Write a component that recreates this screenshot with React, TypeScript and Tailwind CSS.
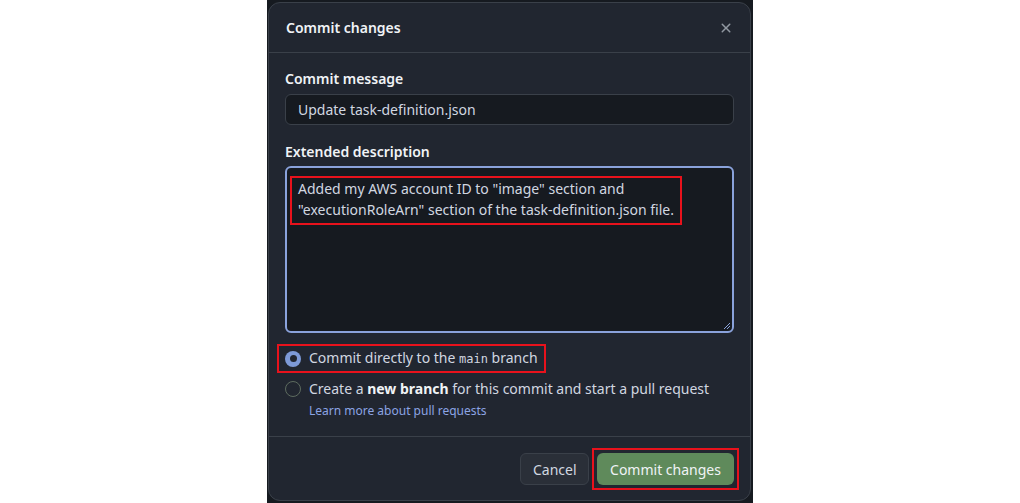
import React from 'react';

function CloseIcon() {
  return (
    <svg width="16" height="16" viewBox="0 0 16 16" fill="#9198a1">
      <path d="M3.72 3.72a.75.75 0 0 1 1.06 0L8 6.94l3.22-3.22a.749.749 0 0 1 1.275.326.749.749 0 0 1-.215.734L9.06 8l3.22 3.22a.749.749 0 0 1-.326 1.275.749.749 0 0 1-.734-.215L8 9.06l-3.22 3.22a.751.751 0 0 1-1.042-.018.751.751 0 0 1-.018-1.042L6.94 8 3.72 4.78a.75.75 0 0 1 0-1.06Z" />
    </svg>
  );
}

function App() {
  return (
    <div className="h-[503px] bg-white flex justify-center font-['Noto_Sans',sans-serif] text-[14px]">
      <div className="w-[486px] h-full bg-[#161a20] pl-px pr-[2px] pt-[2px] pb-[2px]">
        <div className="h-full rounded-xl border border-[#3a4049] bg-[#212630] flex flex-col">
          {/* Header */}
          <div className="h-[50px] flex items-center justify-between pl-[17px] pr-[16px] border-b border-[#3a4049]">
            <h2 className="font-semibold text-[#f0f3f6]">Commit changes</h2>
            <CloseIcon />
          </div>

          {/* Body */}
          <div className="pl-4 pr-[16px] pt-4 flex-1">
            <label className="block font-semibold text-[#f0f3f6] leading-5 mb-[5px]">Commit message</label>
            <div className="h-[31px] rounded-md border border-[#3a4049] bg-[#161a20] flex items-center px-3 text-[#d1d7e0]">
              Update task-definition.json
            </div>

            <label className="block font-semibold text-[#f0f3f6] leading-5 mt-[17px] mb-[4px]">Extended description</label>
            <div className="relative h-[167px] rounded-md border-2 border-[#8aa2db] bg-[#161a20] pl-[3px] pt-[8px]">
              <div className="inline-block border-2 border-[#e8121c] px-[6px] pb-[3px] text-[#d1d7e0] leading-[21px]">
                Added my AWS account ID to "image" section and<br />
                "executionRoleArn" section of the task-definition.json file.
              </div>
              <svg className="absolute right-[1px] bottom-[1px]" width="8" height="8" viewBox="0 0 8 8" stroke="#8aa2db" strokeWidth="1">
                <line x1="1" y1="7" x2="7" y2="1" />
                <line x1="4" y1="7" x2="7" y2="4" />
              </svg>
            </div>

            <div className="mt-[15px] flex flex-col">
              <div className="self-start -mx-2 -my-1 border-2 border-[#e8121c] px-1.5 py-0.5 flex items-center gap-2 leading-5 text-[#d1d7e0]">
                <span className="w-4 h-4 rounded-full bg-[#7d9ad8] flex items-center justify-center">
                  <span className="w-[7px] h-[7px] rounded-full bg-[#212630]" />
                </span>
                <span>
                  Commit directly to the <span className="font-['DejaVu_Sans_Mono',monospace] text-[12px]">main</span> branch
                </span>
              </div>

              <div className="mt-[10px] flex items-center gap-2 leading-5 text-[#d1d7e0]">
                <span className="w-4 h-4 rounded-full border border-[#5d6b5f]" />
                <span>
                  Create a <span className="font-bold text-[#f0f3f6]">new branch</span> for this commit and start a pull request
                </span>
              </div>
              <a className="ml-[24px] mt-[3px] text-[12px] leading-[18px] text-[#8ca4e4]">Learn more about pull requests</a>
            </div>
          </div>

          {/* Footer */}
          <div className="border-t border-[#3a4049] pl-4 pr-[16px] pt-4 pb-[15px] flex justify-end items-center gap-2">
            <button className="h-8 px-3 rounded-md border border-[#3a4049] bg-[#2a2f38] text-[#d1d7e0] w-[69px]">Cancel</button>
            <div className="-m-[5px] border-2 border-[#e8121c] p-[3px]">
              <button className="h-8 px-3 rounded-md bg-[#5f8a5b] text-[#f0f3f6] w-[137px]">Commit changes</button>
            </div>
          </div>
        </div>
      </div>
    </div>
  );
}

export default App;
